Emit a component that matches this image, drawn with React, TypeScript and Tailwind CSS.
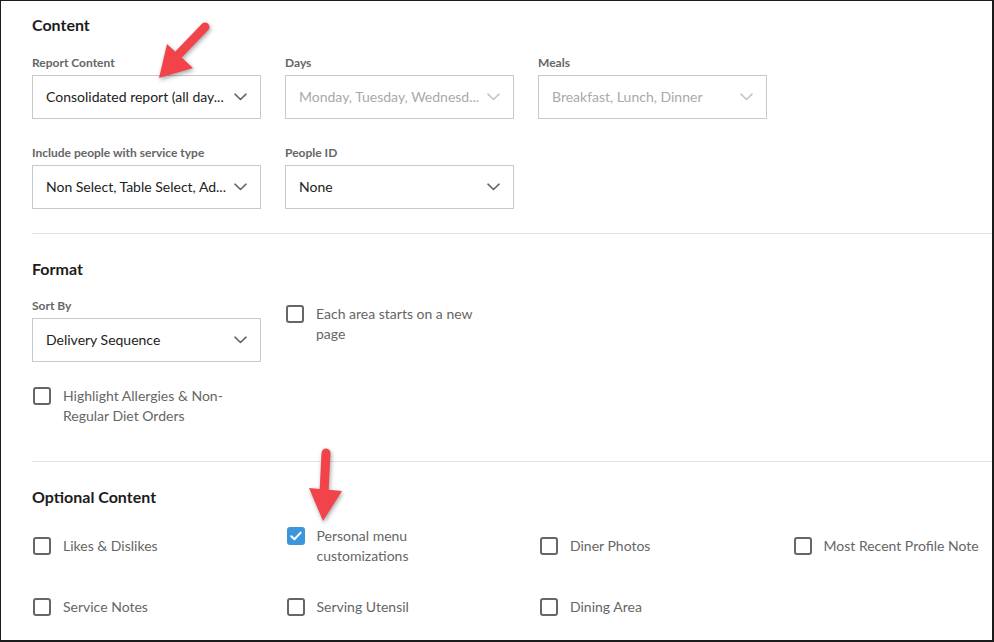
import React from "react";

type SelectProps = {
  value: string;
  disabled?: boolean;
};

const Chevron: React.FC<{ disabled?: boolean }> = ({ disabled }) => (
  <svg width="13" height="8" viewBox="0 0 13 8" fill="none" className="shrink-0">
    <path
      d="M1 1.2L6.5 6.5L12 1.2"
      stroke={disabled ? "#c4c4c4" : "#666666"}
      strokeWidth="1.6"
      strokeLinecap="round"
      strokeLinejoin="round"
    />
  </svg>
);

const Select: React.FC<SelectProps> = ({ value, disabled }) => (
  <div className="flex h-[44px] w-[229px] items-center justify-between border border-[#c9c9c9] bg-white pl-[13px] pr-[13px]">
    <span className={`whitespace-nowrap text-[14px] leading-[18px] ${disabled ? "text-[#a9a9a9]" : "text-[#222222]"}`}>
      {value}
    </span>
    <Chevron disabled={disabled} />
  </div>
);

const Field: React.FC<{ label: string; children: React.ReactNode }> = ({ label, children }) => (
  <div className="flex flex-col">
    <label className="h-[14px] text-[12px] font-bold leading-[14px] text-[#666666]">{label}</label>
    <div className="mt-[5px]">{children}</div>
  </div>
);

const Checkbox: React.FC<{ label: string; checked?: boolean }> = ({ label, checked }) => (
  <div className="flex items-start">
    <div className="flex h-[20px] items-center pl-px">
      {checked ? (
        <div className="flex h-[18px] w-[18px] items-center justify-center rounded-[3px] bg-[#3b97d9]">
          <svg width="12" height="10" viewBox="0 0 12 10" fill="none">
            <path d="M1.3 5.2L4.4 8.2L10.7 1.6" stroke="white" strokeWidth="2" strokeLinecap="round" strokeLinejoin="round" />
          </svg>
        </div>
      ) : (
        <div className="h-[18px] w-[18px] rounded-[3px] border-2 border-[#666666] bg-white" />
      )}
    </div>
    <span className="ml-[12px] max-w-[172px] text-[14px] leading-[20px] text-[#666666]">{label}</span>
  </div>
);

const Heading: React.FC<{ children: React.ReactNode }> = ({ children }) => (
  <h2 className="h-[20px] text-[16px] font-bold leading-[20px] text-[#1c1c1c]">{children}</h2>
);

const App: React.FC = () => {
  return (
    <div
      className="relative h-[642px] w-[994px] overflow-hidden border-b-2 border-l border-r-2 border-t border-[#1b1b1b] bg-white"
      style={{ fontFamily: "Lato, 'Open Sans', sans-serif" }}
    >
      <div className="pl-[31px] pt-[14px]">
        {/* Content */}
        <Heading>Content</Heading>
        <div className="mt-[21px] grid grid-cols-[repeat(3,229px)] gap-x-[24px] gap-y-[27px]">
          <Field label="Report Content">
            <Select value="Consolidated report (all day..." />
          </Field>
          <Field label="Days">
            <Select value="Monday, Tuesday, Wednesd..." disabled />
          </Field>
          <Field label="Meals">
            <Select value="Breakfast, Lunch, Dinner" disabled />
          </Field>
          <Field label="Include people with service type">
            <Select value="Non Select, Table Select, Ad..." />
          </Field>
          <Field label="People ID">
            <Select value="None" />
          </Field>
        </div>

        <div className="mt-[24px] h-px bg-[#e2e2e2]" />

        {/* Format */}
        <div className="mt-[25px]">
          <Heading>Format</Heading>
        </div>
        <div className="mt-[20px] grid grid-cols-[repeat(2,229px)] gap-x-[24px]">
          <Field label="Sort By">
            <Select value="Delivery Sequence" />
          </Field>
          <div className="mt-[5px]">
            <Checkbox label="Each area starts on a new page" />
          </div>
        </div>
        <div className="mt-[24px]">
          <Checkbox label="Highlight Allergies & Non-Regular Diet Orders" />
        </div>

        <div className="mt-[35px] h-px bg-[#e2e2e2]" />

        {/* Optional Content */}
        <div className="mt-[25px]">
          <Heading>Optional Content</Heading>
        </div>
        <div className="mt-[19px] grid grid-cols-[repeat(4,229px)] items-center gap-x-[24.5px] gap-y-[31px]">
          <Checkbox label="Likes & Dislikes" />
          <Checkbox label="Personal menu customizations" checked />
          <Checkbox label="Diner Photos" />
          <Checkbox label="Most Recent Profile Note" />
          <Checkbox label="Service Notes" />
          <Checkbox label="Serving Utensil" />
          <Checkbox label="Dining Area" />
        </div>
      </div>

      {/* Callout arrows */}
      <svg
        className="pointer-events-none absolute left-0 top-0 drop-shadow-[1px_2px_2px_rgba(0,0,0,0.35)]"
        width="994"
        height="642"
        viewBox="0 0 994 642"
      >
        <line x1="204" y1="26" x2="178" y2="53" stroke="#f2434b" strokeWidth="9" strokeLinecap="round" />
        <polygon points="158,77 166,43 192,67" fill="#f2434b" />
        <line x1="325" y1="452" x2="323" y2="492" stroke="#f2434b" strokeWidth="9" strokeLinecap="round" />
        <polygon points="322,520 308,487 341,490" fill="#f2434b" />
      </svg>
    </div>
  );
};

export default App;
